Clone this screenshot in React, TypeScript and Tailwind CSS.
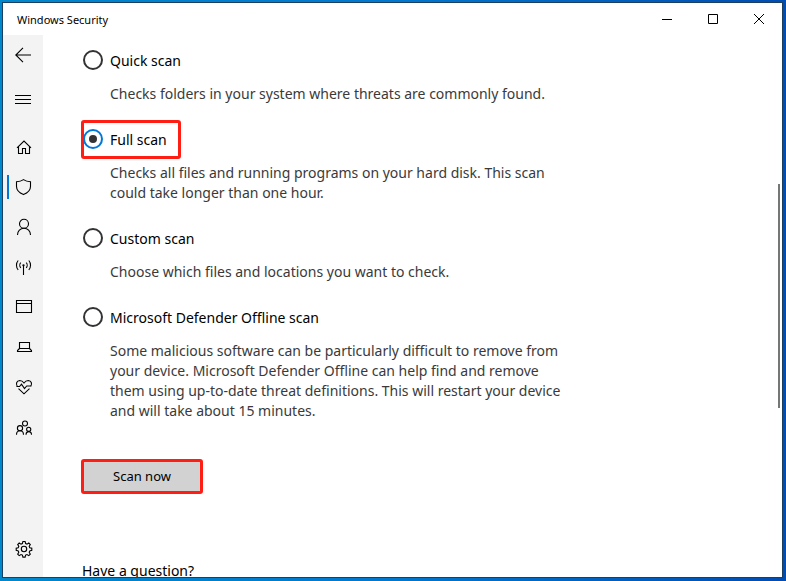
import { useState, type ReactNode } from 'react';

interface ScanOption {
  id: string;
  label: string;
  description: string;
}

const scanOptions: ScanOption[] = [
  {
    id: 'quick',
    label: 'Quick scan',
    description: 'Checks folders in your system where threats are commonly found.',
  },
  {
    id: 'full',
    label: 'Full scan',
    description: 'Checks all files and running programs on your hard disk. This scan could take longer than one hour.',
  },
  {
    id: 'custom',
    label: 'Custom scan',
    description: 'Choose which files and locations you want to check.',
  },
  {
    id: 'offline',
    label: 'Microsoft Defender Offline scan',
    description:
      'Some malicious software can be particularly difficult to remove from your device. Microsoft Defender Offline can help find and remove them using up-to-date threat definitions. This will restart your device and will take about 15 minutes.',
  },
];

const navItems: { id: string; label: string; icon: ReactNode }[] = [
  {
    id: 'home',
    label: 'Home',
    icon: <path d="M4 10.8 11 4l7 6.8M5.5 9.5v7h4v-5h3v5h4v-7" />,
  },
  {
    id: 'virus',
    label: 'Virus & threat protection',
    icon: <path d="M10.5 2.6C8.5 4 6 4.6 3.5 4.7v4.8c0 3.8 2.8 6.4 7 8.1 4.2-1.7 7-4.3 7-8.1V4.7c-2.5-.1-5-.7-7-2.1z" />,
  },
  {
    id: 'account',
    label: 'Account protection',
    icon: (
      <>
        <circle cx="11" cy="6.8" r="4.5" />
        <path d="M4.5 18c0-4 2.8-6.7 6.5-6.7s6.5 2.7 6.5 6.7" />
      </>
    ),
  },
  {
    id: 'firewall',
    label: 'Firewall & network protection',
    icon: (
      <>
        <path d="M10.5 8v10" />
        <path d="M7.8 5.6c-1.3 1.4-1.3 3.8 0 5.2M13.2 5.6c1.3 1.4 1.3 3.8 0 5.2M5.2 3.5c-2.3 2.6-2.3 6.8 0 9.4M15.8 3.5c2.3 2.6 2.3 6.8 0 9.4" />
        <circle cx="10.5" cy="8.3" r=".6" />
      </>
    ),
  },
  {
    id: 'app',
    label: 'App & browser control',
    icon: <path d="M3.5 3.5h15v12h-15zM3.5 6.5h15" />,
  },
  {
    id: 'device',
    label: 'Device security',
    icon: <path d="M6.5 5.5h10v6h-10zM6.500 11.500l-2 2v1h14v-1l-2-2" />,
  },
  {
    id: 'health',
    label: 'Device performance & health',
    icon: (
      <>
        <path d="M4.200 9.200C2.600 6.800 3.700 3.700 6.700 3.500c1.800 0 3.200.9 4.300 2.500 1.100-1.600 2.500-2.500 4.300-2.500 3 .2 4.100 3.300 2.500 5.700" />
        <path d="M3.500 9.500h3l2-2.300 3 4.300 2.200-2.500h4.500M5.500 11.700l5.500 5.100 5.500-5.100" />
      </>
    ),
  },
  {
    id: 'family',
    label: 'Family options',
    icon: (
      <>
        <circle cx="12" cy="6.5" r="2.5" />
        <circle cx="7" cy="11.2" r="2.6" />
        <circle cx="15.7" cy="12.3" r="2.1" />
        <path d="M3.500 17.800c0-2.500 1.400-4 3.500-4s3.500 1.500 3.500 4M13 17.800c0-2 1-3.200 2.700-3.200s2.800 1.200 2.800 3.200" />
      </>
    ),
  },
];

function Icon({ children }: { children: ReactNode }) {
  return (
    <svg className="w-5 h-5" viewBox="0 0 20 20" fill="none" stroke="currentColor" strokeWidth={1.1} aria-hidden="true">
      {children}
    </svg>
  );
}

function TitleBar() {
  const buttonClass = 'w-[46px] h-8 flex items-center justify-center hover:bg-gray-200';

  return (
    <header className="h-8 shrink-0 flex items-center justify-between pl-[14px]">
      <h1 className="pt-[2px] text-[11px]">Windows Security</h1>
      <div className="flex">
        <button className={buttonClass} aria-label="Minimize">
          <svg className="w-[10px] h-[10px]" viewBox="0 0 10 10" stroke="currentColor"><path d="M0 5.5h10" /></svg>
        </button>
        <button className={buttonClass} aria-label="Maximize">
          <svg className="w-[10px] h-[10px]" viewBox="0 0 10 10" fill="none" stroke="currentColor"><path d="M.5.5h9v9h-9z" /></svg>
        </button>
        <button className={buttonClass} aria-label="Close">
          <svg className="w-[10px] h-[10px]" viewBox="0 0 10 10" stroke="currentColor"><path d="M0 0l10 10M10 0L0 10" /></svg>
        </button>
      </div>
    </header>
  );
}

function Sidebar() {
  const [active, setActive] = useState('virus');
  const itemClass = 'w-full h-10 shrink-0 flex items-center justify-center relative hover:bg-gray-200';

  return (
    <nav className="w-10 shrink-0 flex flex-col bg-[#f3f3f3]">
      <button className={itemClass} aria-label="Back">
        <Icon><path d="M10 2.8 2.8 10l7.2 7.2M2.8 10H18" /></Icon>
      </button>
      <button className={`${itemClass} mt-1`} aria-label="Open navigation">
        <Icon><path d="M2 6.5h16M2 10.5h16M2 14.5h16" /></Icon>
      </button>
      <div className="mt-2">
        {navItems.map(item => (
          <button key={item.id} className={itemClass} aria-label={item.label} onClick={() => setActive(item.id)}>
            {active === item.id && <span className="absolute left-1 top-2 w-[2px] h-6 bg-[#0078d7]" />}
            <Icon>{item.icon}</Icon>
          </button>
        ))}
      </div>
      <button className={`${itemClass} mt-auto mb-2`} aria-label="Settings">
        <Icon>
          <circle cx="11" cy="10" r="2.7" />
          <path d="M9.900 2.500h2.200l.5 2 1.400.6 1.800-1.100 1.500 1.500-1.100 1.800.6 1.400 2 .5v2.200l-2 .5-.6 1.400 1.100 1.800-1.500 1.500-1.800-1.100-1.400.6-.5 2H9.900l-.5-2-1.400-.6-1.800 1.100-1.500-1.500 1.100-1.800-.6-1.400-2-.5V9.200l2-.5.6-1.400-1.100-1.800L6.200 4 8 5.100l1.400-.6z" />
        </Icon>
      </button>
    </nav>
  );
}

export default function App() {
  const [selected, setSelected] = useState('full');

  return (
    <div className="h-screen pt-[2px] pl-[2px] pr-[3px] pb-[3px] bg-linear-to-r from-[#0088cc] via-[#0078d0] to-[#004db4] font-['Noto_Sans','Segoe_UI',sans-serif] text-black">
      <div className="h-full flex flex-col bg-white border border-[#1c3f60] overflow-hidden">
        <TitleBar />
        <div className="flex flex-1 min-h-0">
          <Sidebar />
          <main className="flex-1 min-w-0 overflow-hidden pt-[15px] px-10">
            <fieldset className="flex flex-col gap-[25px] max-w-[488px]">
              {scanOptions.map(option => (
                <div key={option.id}>
                  <label className="relative flex w-fit items-center gap-[7px] h-5 text-[14px]">
                    <input
                      type="radio"
                      name="scan"
                      checked={selected === option.id}
                      onChange={() => setSelected(option.id)}
                      aria-describedby={`${option.id}-description`}
                      className="appearance-none w-5 h-5 p-1 rounded-full border-2 border-[#333] bg-clip-content checked:border-[#0078d7] checked:bg-[#333]"
                    />
                    {option.label}
                    {option.id === 'full' && (
                      <span className="absolute -left-[2px] -right-[14px] -top-[9px] -bottom-[10px] border-3 border-[#ff1e14] rounded-[3px] pointer-events-none" />
                    )}
                  </label>
                  <p id={`${option.id}-description`} className="mt-[14px] pl-[27px] text-[14px] leading-5 text-[#3a3a3a]">
                    {option.description}
                  </p>
                </div>
              ))}
            </fieldset>
            <button className="block mt-[38px] -ml-[2px] w-[122px] h-[35px] border-3 border-[#ff1e14] rounded-[3px] bg-[#d2d2d2] text-[13px]">
              Scan now
            </button>
            <h2 className="mt-[66px] -ml-px text-[14px] leading-[22px] whitespace-nowrap">Have a question?</h2>
          </main>
          <div className="w-1 shrink-0 pt-[149px]">
            <div className="w-[2px] h-[224px] bg-[#767676]" />
          </div>
        </div>
      </div>
    </div>
  );
}
